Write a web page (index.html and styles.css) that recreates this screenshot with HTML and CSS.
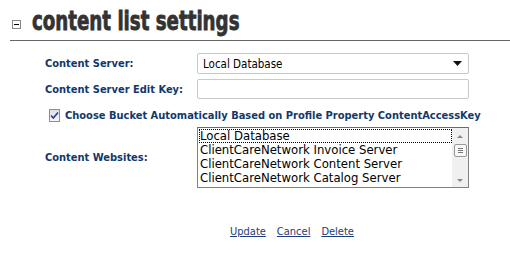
FILE: index.html
```html
<!DOCTYPE html>
<html lang="en">
<head>
<meta charset="UTF-8">
<title>content list settings</title>
<link rel="stylesheet" href="styles.css">
</head>
<body>

<div class="panel">
    <div class="panel-head">
        <span class="toggle"></span>
        <h1>content list settings</h1>
    </div>

    <div class="settings">
        <div class="label">Content Server:</div>
        <div class="field">
            <div class="dropdown">
                <span>Local Database</span>
                <svg class="arrow" width="9" height="5" viewBox="0 0 9 5"><path d="M0 0h9L4.5 5z" fill="#111"/></svg>
            </div>
        </div>

        <div class="label">Content Server Edit Key:</div>
        <div class="field">
            <div class="textbox"></div>
        </div>

        <div class="check-row">
            <span class="checkbox">
                <svg width="9" height="9" viewBox="0 0 9 9"><path d="M1 4.5l2.3 2.5L8 1.5" fill="none" stroke="#2a3f8c" stroke-width="1.6"/></svg>
            </span>
            <span>Choose Bucket Automatically Based on Profile Property ContentAccessKey</span>
        </div>

        <div class="label">Content Websites:</div>
        <div class="field">
            <div class="listbox">
                <ul class="options">
                    <li class="focused">Local Database</li>
                    <li>ClientCareNetwork Invoice Server</li>
                    <li>ClientCareNetwork Content Server</li>
                    <li>ClientCareNetwork Catalog Server</li>
                </ul>
                <div class="scroll">
                    <span class="up"></span>
                    <span class="thumb"><i></i><i></i><i></i></span>
                    <span class="down"></span>
                </div>
            </div>
        </div>
    </div>

    <div class="actions">
        <a href="#">Update</a>
        <a href="#">Cancel</a>
        <a href="#">Delete</a>
    </div>
</div>

</body>
</html>
```

FILE: styles.css
```css
body {
    margin: 0;
    padding: 0;
    background: #fff;
    font-family: Tahoma, "DejaVu Sans Condensed", "DejaVu Sans", sans-serif;
}

.panel {
    padding-left: 10px;
}

.panel-head {
    display: flex;
    align-items: center;
    height: 40px;
    border-bottom: 1px solid #666;
}

.toggle {
    position: relative;
    flex: none;
    width: 7px;
    height: 7px;
    border: 1px solid #888;
    margin: 8px 11px 0 2px;
}

.toggle::after {
    content: "";
    position: absolute;
    left: 1px;
    top: 3px;
    width: 5px;
    height: 1px;
    background: #000;
}

h1 {
    margin: 0;
    font-family: "DejaVu Sans Condensed", sans-serif;
    font-weight: bold;
    font-size: 27px;
    color: #333;
    white-space: nowrap;
    -webkit-text-stroke: 0.8px #333;
    transform: scaleX(0.75);
    transform-origin: left center;
}

.settings {
    display: grid;
    grid-template-columns: 152px 272px;
    align-items: center;
    row-gap: 5px;
    margin: 12px 0 0 35px;
}

.label {
    font-size: 11px;
    font-weight: bold;
    color: #12386b;
}

.dropdown {
    display: flex;
    align-items: center;
    justify-content: space-between;
    box-sizing: border-box;
    height: 21px;
    padding: 0 6px 0 5px;
    border: 1px solid #c9c9c9;
    border-radius: 2px;
    font-size: 11.5px;
    color: #000;
}

.textbox {
    box-sizing: border-box;
    height: 20px;
    border: 1px solid #c9c9c9;
    border-radius: 2px;
}

.check-row {
    grid-column: 1 / 3;
    display: flex;
    align-items: center;
    gap: 5px;
    margin: 5px 0 0 4px;
    font-size: 11px;
    font-weight: bold;
    color: #12386b;
    white-space: nowrap;
}

.checkbox {
    display: flex;
    align-items: center;
    justify-content: center;
    box-sizing: border-box;
    width: 13px;
    height: 13px;
    border: 1px solid #8a8f9a;
    background: linear-gradient(#dcdfe6, #f6f7f9);
}

.listbox {
    display: flex;
    box-sizing: border-box;
    height: 61px;
    border: 1px solid #808080;
    border-top-color: #6a6a6a;
    overflow: hidden;
}

.options {
    flex: 1;
    list-style: none;
    margin: 0;
    padding: 1px 0 0 1px;
    font-size: 13px;
    line-height: 14px;
    color: #000;
}

.options li {
    padding-left: 1px;
    white-space: nowrap;
}

.options li.focused {
    outline: 1px dotted #000;
    outline-offset: -1px;
}

.scroll {
    display: flex;
    flex-direction: column;
    align-items: center;
    width: 16px;
    background: #f0f0f0;
    padding: 7px 0 5px;
    box-sizing: border-box;
}

.up, .down {
    width: 0;
    height: 0;
    border-left: 3px solid transparent;
    border-right: 3px solid transparent;
}

.up {
    border-bottom: 3px solid #888;
}

.down {
    margin-top: auto;
    border-top: 3px solid #888;
}

.thumb {
    display: flex;
    flex-direction: column;
    justify-content: center;
    gap: 1px;
    box-sizing: border-box;
    width: 13px;
    height: 13px;
    margin-top: 6px;
    border: 1px solid #999;
    border-radius: 2px;
    background: #f7f7f7;
    padding: 0 3px;
}

.thumb i {
    height: 1px;
    background: #777;
}

.actions {
    display: flex;
    gap: 11px;
    margin: 37px 0 0 220px;
    font-size: 11px;
}

.actions a {
    color: #1f3c7a;
}
```
